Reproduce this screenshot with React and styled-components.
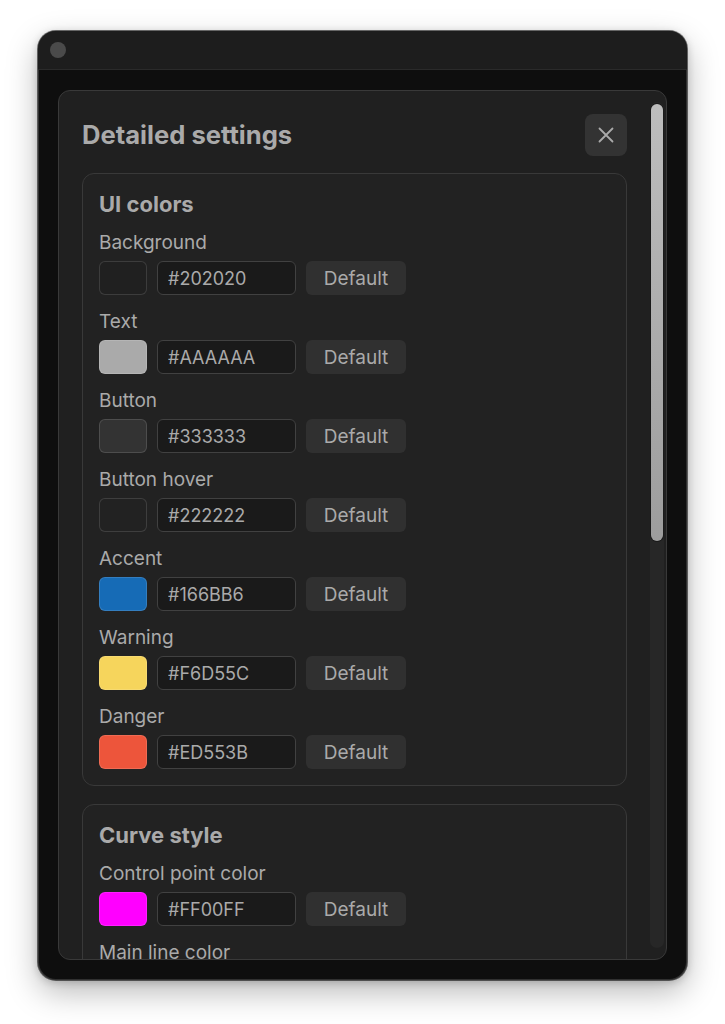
import React from "react";
import styled, { createGlobalStyle } from "styled-components";

const GlobalStyle = createGlobalStyle`
  html, body {
    margin: 0;
    padding: 0;
    background: #ffffff;
  }
  body {
    font-family: Inter, "Noto Sans", "Liberation Sans", sans-serif;
    -webkit-font-smoothing: antialiased;
  }
  * { box-sizing: border-box; }
`;

const Page = styled.div`
  display: flex;
  padding: 31px 38px 44px;
`;

const Window = styled.div`
  width: 649px;
  height: 949px;
  display: flex;
  flex-direction: column;
  border-radius: 18px;
  overflow: hidden;
  background: #0e0e0e;
  box-shadow:
    0 0 0 1px rgba(0, 0, 0, 0.55),
    inset 0 0 0 1px rgba(255, 255, 255, 0.14),
    0 12px 32px rgba(0, 0, 0, 0.28),
    0 2px 8px rgba(0, 0, 0, 0.2);
`;

const TitleBar = styled.div`
  height: 39px;
  flex: none;
  display: flex;
  align-items: center;
  padding-left: 12px;
  background: #1d1d1d;
  border-bottom: 1px solid #2a2a2a;
`;

const WindowDot = styled.span`
  width: 16px;
  height: 16px;
  border-radius: 50%;
  background: #4a4a4a;
`;

const Body = styled.div`
  flex: 1;
  min-height: 0;
  display: flex;
  padding: 20px;
`;

const Dialog = styled.div`
  flex: 1;
  min-height: 0;
  display: flex;
  background: #202020;
  border: 1px solid #393939;
  border-radius: 12px;
  overflow: hidden;
  color: #aaaaaa;
`;

const DialogContent = styled.div`
  flex: 1;
  min-width: 0;
  overflow: hidden;
  padding: 23px 23px 23px 23px;
`;

const ScrollTrack = styled.div`
  flex: none;
  width: 14px;
  margin: 11px 2px 11px 0;
  padding: 2px 1px;
  border-radius: 7px;
  background: #272727;
  display: flex;
  flex-direction: column;
`;

const ScrollThumb = styled.div`
  flex: none;
  border-radius: 6px;
  background: linear-gradient(#bdbdbd, #9d9d9d);
  box-shadow: 0 0 0 1px #1a1a1a;
`;

const DialogHeader = styled.header`
  display: flex;
  align-items: center;
  justify-content: space-between;
  margin-bottom: 17px;
`;

const DialogTitle = styled.h1`
  margin: 0;
  font-size: 25.6px;
  font-weight: 700;
  line-height: 30px;
  color: #aaaaaa;
`;

const CloseButton = styled.button`
  width: 42px;
  height: 42px;
  display: flex;
  align-items: center;
  justify-content: center;
  padding: 0;
  border: none;
  border-radius: 8px;
  background: #333333;
  color: #aaaaaa;
  cursor: pointer;
`;

const Sections = styled.div`
  display: flex;
  flex-direction: column;
  gap: 18px;
`;

const Section = styled.section`
  display: flex;
  flex-direction: column;
  gap: 15px;
  padding: 18px 16px 16px;
  border: 1px solid #393939;
  border-radius: 12px;
  background: #222222;
`;

const SectionTitle = styled.h2`
  margin: 0;
  font-size: 22px;
  font-weight: 700;
  line-height: 24px;
  color: #aaaaaa;
`;

const Field = styled.div`
  display: flex;
  flex-direction: column;
  gap: 6px;
`;

const FieldLabel = styled.label`
  font-size: 19px;
  line-height: 24px;
  color: #aaaaaa;
`;

const Controls = styled.div`
  display: flex;
  align-items: center;
  gap: 10px;
`;

const Swatch = styled.span`
  width: 48px;
  height: 34px;
  border-radius: 6px;
  background: ${(p) => p.$color};
  border: 1px solid rgba(255, 255, 255, 0.13);
`;

const HexInput = styled.input`
  width: 139px;
  height: 34px;
  padding: 0 10px;
  border: 1px solid #414141;
  border-radius: 6px;
  background: #1a1a1a;
  color: #aaaaaa;
  font-family: inherit;
  font-size: 18px;
  outline: none;
`;

const DefaultButton = styled.button`
  width: 100px;
  height: 34px;
  padding: 0;
  border: none;
  border-radius: 6px;
  background: #303030;
  color: #aaaaaa;
  font-family: inherit;
  font-size: 19px;
  cursor: pointer;
`;

const CloseIcon = () => (
  <svg width="16" height="16" viewBox="0 0 16 16" fill="none">
    <path d="M1.5 1.5 14.5 14.5 M14.5 1.5 1.5 14.5" stroke="#aaaaaa" strokeWidth="1.8" strokeLinecap="round" />
  </svg>
);

const sections = [
  {
    title: "UI colors",
    fields: [
      ["Background", "#202020"],
      ["Text", "#AAAAAA"],
      ["Button", "#333333"],
      ["Button hover", "#222222"],
      ["Accent", "#166BB6"],
      ["Warning", "#F6D55C"],
      ["Danger", "#ED553B"],
    ],
  },
  {
    title: "Curve style",
    fields: [
      ["Control point color", "#FF00FF"],
      ["Main line color", "#166BB6"],
      ["Sub line color", "#555555"],
      ["Handle color", "#AAAAAA"],
      ["Selected point color", "#F6D55C"],
      ["Preview line color", "#3CAEA3"],
      ["Guide color", "#333333"],
    ],
  },
  {
    title: "Grid",
    fields: [
      ["Grid line color", "#2A2A2A"],
      ["Axis color", "#444444"],
      ["Label color", "#888888"],
    ],
  },
];

// Share of the scrollable content that is visible, which sets the thumb size.
const visibleShare = 0.519;

function ColorField({ label, value }) {
  return (
    <Field>
      <FieldLabel>{label}</FieldLabel>
      <Controls>
        <Swatch $color={value} />
        <HexInput defaultValue={value} spellCheck={false} />
        <DefaultButton>Default</DefaultButton>
      </Controls>
    </Field>
  );
}

export default function App() {
  return (
    <>
      <GlobalStyle />
      <Page>
        <Window>
          <TitleBar>
            <WindowDot />
          </TitleBar>
          <Body>
            <Dialog>
              <DialogContent>
                <DialogHeader>
                  <DialogTitle>Detailed settings</DialogTitle>
                  <CloseButton aria-label="Close">
                    <CloseIcon />
                  </CloseButton>
                </DialogHeader>
                <Sections>
                  {sections.map((s) => (
                    <Section key={s.title}>
                      <SectionTitle>{s.title}</SectionTitle>
                      {s.fields.map(([label, value]) => (
                        <ColorField key={label} label={label} value={value} />
                      ))}
                    </Section>
                  ))}
                </Sections>
              </DialogContent>
              <ScrollTrack>
                <ScrollThumb style={{ height: `${visibleShare * 100}%` }} />
              </ScrollTrack>
            </Dialog>
          </Body>
        </Window>
      </Page>
    </>
  );
}
